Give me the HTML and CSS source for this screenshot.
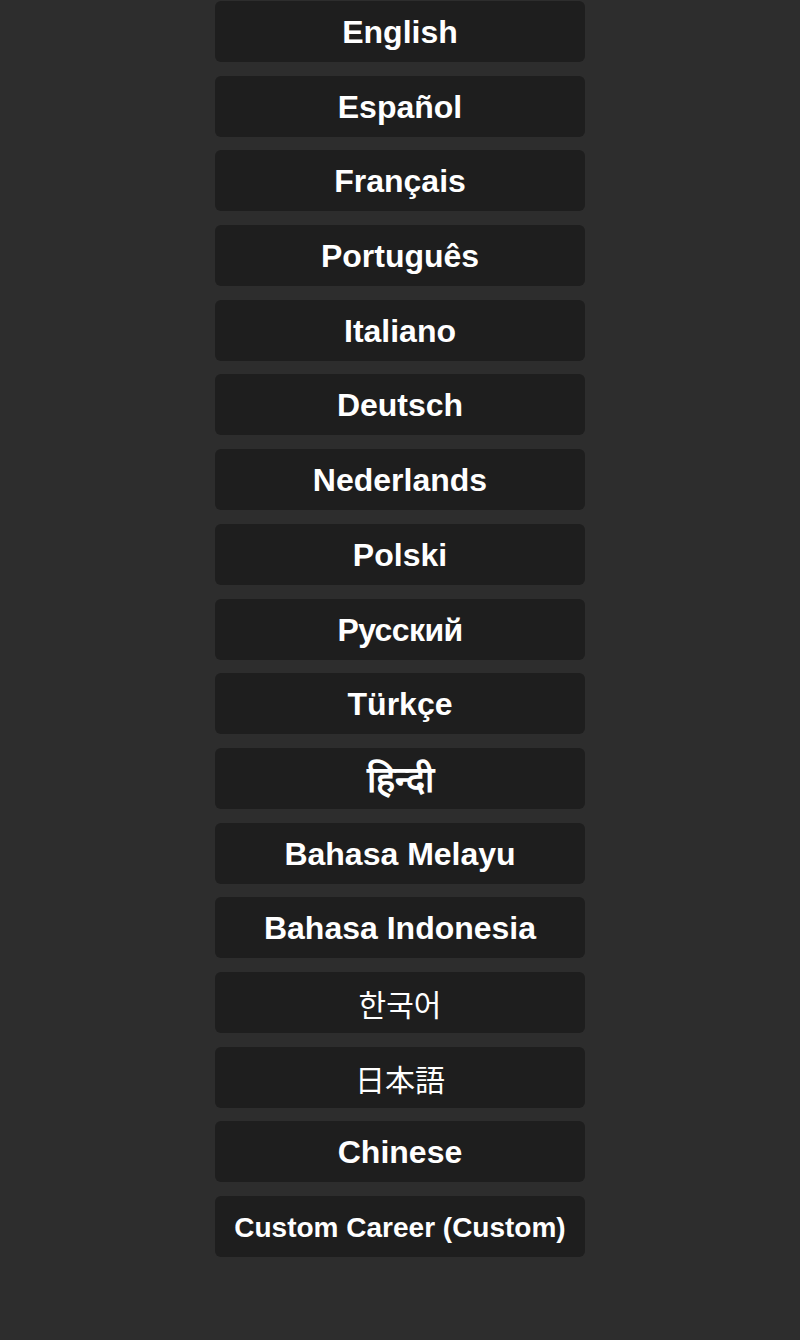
FILE: index.html
```html
<!DOCTYPE html>
<html>
<head>
<meta charset="utf-8">
<link rel="stylesheet" href="styles.css">
</head>
<body>
<div class="list">
  <button class="lang">English</button>
  <button class="lang">Español</button>
  <button class="lang">Français</button>
  <button class="lang">Português</button>
  <button class="lang">Italiano</button>
  <button class="lang">Deutsch</button>
  <button class="lang">Nederlands</button>
  <button class="lang">Polski</button>
  <button class="lang ru">Русский</button>
  <button class="lang">Türkçe</button>
  <button class="lang hi">हिन्दी</button>
  <button class="lang">Bahasa Melayu</button>
  <button class="lang">Bahasa Indonesia</button>
  <button class="lang cjk kr">한국어</button>
  <button class="lang cjk jp">日本語</button>
  <button class="lang">Chinese</button>
  <button class="lang small">Custom Career (Custom)</button>
</div>
</body>
</html>
```
FILE: styles.css
```css
html, body {
  margin: 0;
  padding: 0;
  background: #2d2d2d;
}
body {
  height: 1340px;
  font-family: "Liberation Sans", Arial, sans-serif;
}
.list {
  display: flex;
  flex-direction: column;
  align-items: center;
  gap: 13.7px;
  padding-top: 1px;
}
.lang {
  width: 370px;
  height: 61px;
  border: none;
  border-radius: 6px;
  background: #1e1e1e;
  color: #ffffff;
  font-family: "Liberation Sans", Arial, sans-serif;
  font-weight: 700;
  font-size: 32px;
  padding: 2px 0 0 0;
  display: flex;
  align-items: center;
  justify-content: center;
  white-space: nowrap;
}
.ru {
  letter-spacing: -0.6px;
}
.hi {
  font-size: 36px;
  padding-top: 0;
}
.cjk {
  font-weight: 400;
  font-size: 30px;
}
.kr {
  font-family: "Noto Sans CJK KR", sans-serif;
}
.jp {
  font-family: "Noto Sans CJK JP", sans-serif;
}
.small {
  font-size: 28px;
}
```
